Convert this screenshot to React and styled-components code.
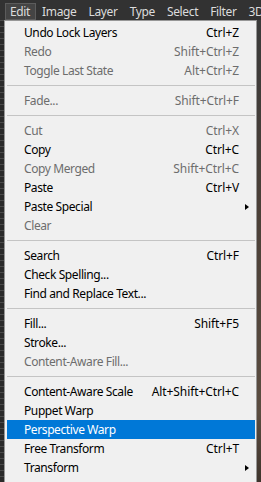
import React from 'react';
import styled, { createGlobalStyle } from 'styled-components';

const GlobalStyle = createGlobalStyle`
  html, body {
    margin: 0;
    padding: 0;
    background: #2d2d2d;
    overflow: hidden;
  }
  body {
    font-family: "Noto Sans", "Open Sans", sans-serif;
    font-size: 12px;
  }
`;

const Page = styled.div`
  width: 261px;
  height: 482px;
  display: flex;
  flex-direction: column;
  overflow: hidden;
  background: #2d2d2d;
`;

const MenuBar = styled.div`
  height: 20px;
  display: flex;
  align-items: center;
  padding-left: 5px;
  gap: 1px;
  background: #323232;
  overflow: hidden;
`;

const BarItem = styled.div`
  height: 14px;
  display: flex;
  align-items: center;
  padding: 0 5px 1px 4px;
  margin-top: 3px;
  color: #dcdcdc;
  font-size: 12px;
  letter-spacing: -0.35px;
  white-space: nowrap;
  border: 1px solid ${p => (p.$open ? '#5c5c5c' : 'transparent')};
  background: ${p => (p.$open ? '#444444' : 'transparent')};
`;

const Body = styled.div`
  flex: 1;
  display: flex;
  min-height: 0;
`;

const Ruler = styled.div`
  width: 4px;
  background-color: #2a2a2a;
  background-image: repeating-linear-gradient(
    to bottom,
    #4a4a4a 0px,
    #4a4a4a 1px,
    transparent 1px,
    transparent 6px
  );
`;

const Canvas = styled.div`
  width: 4px;
  background: linear-gradient(to bottom, #3a3a3a, #4a3f37 40%, #5a4c40 85%, #3e342c);
`;

const Menu = styled.div`
  flex: 1;
  background: #f0f0f0;
  border: 1px solid #979797;
  border-bottom: none;
  padding: 2px 1px 0 2px;
  color: #000;
`;

const Row = styled.div`
  height: 19px;
  display: grid;
  grid-template-columns: 1fr auto 16px;
  align-items: center;
  padding-left: 17px;
  background: ${p => (p.$active ? '#0078d7' : 'transparent')};
  color: ${p => (p.$active ? '#ffffff' : p.$disabled ? '#6d6d6d' : '#000000')};
  white-space: nowrap;
`;

const Label = styled.span`
  letter-spacing: -0.4px;
`;

const Shortcut = styled.span`
  text-align: right;
  letter-spacing: -0.1px;
`;

const Arrow = styled.span`
  justify-self: start;
  margin-left: 6px;
  width: 0;
  height: 0;
  border-top: 3.5px solid transparent;
  border-bottom: 3.5px solid transparent;
  border-left: 4px solid #000;
`;

const Separator = styled.div`
  height: 11px;
  display: flex;
  align-items: center;
  &::after {
    content: '';
    flex: 1;
    height: 1px;
    background: #c4c4c4;
  }
`;

const bar = ['Edit', 'Image', 'Layer', 'Type', 'Select', 'Filter', '3D'];

const items = [
  { label: 'Undo Lock Layers', key: 'Ctrl+Z' },
  { label: 'Redo', key: 'Shift+Ctrl+Z', disabled: true },
  { label: 'Toggle Last State', key: 'Alt+Ctrl+Z', disabled: true },
  'sep',
  { label: 'Fade...', key: 'Shift+Ctrl+F', disabled: true },
  'sep',
  { label: 'Cut', key: 'Ctrl+X', disabled: true },
  { label: 'Copy', key: 'Ctrl+C' },
  { label: 'Copy Merged', key: 'Shift+Ctrl+C', disabled: true },
  { label: 'Paste', key: 'Ctrl+V' },
  { label: 'Paste Special', sub: true },
  { label: 'Clear', disabled: true },
  'sep',
  { label: 'Search', key: 'Ctrl+F' },
  { label: 'Check Spelling...' },
  { label: 'Find and Replace Text...' },
  'sep',
  { label: 'Fill...', key: 'Shift+F5' },
  { label: 'Stroke...' },
  { label: 'Content-Aware Fill...', disabled: true },
  'sep',
  { label: 'Content-Aware Scale', key: 'Alt+Shift+Ctrl+C' },
  { label: 'Puppet Warp' },
  { label: 'Perspective Warp', active: true },
  { label: 'Free Transform', key: 'Ctrl+T' },
  { label: 'Transform', sub: true },
];

export default function App() {
  return (
    <Page>
      <GlobalStyle />
      <MenuBar>
        {bar.map(name => (
          <BarItem key={name} $open={name === 'Edit'}>
            {name}
          </BarItem>
        ))}
      </MenuBar>
      <Body>
        <Ruler />
        <Menu>
          {items.map((it, i) =>
            it === 'sep' ? (
              <Separator key={i} />
            ) : (
              <Row key={i} $disabled={it.disabled} $active={it.active}>
                <Label>{it.label}</Label>
                <Shortcut>{it.key}</Shortcut>
                {it.sub ? <Arrow /> : <span />}
              </Row>
            )
          )}
        </Menu>
        <Canvas />
      </Body>
    </Page>
  );
}
